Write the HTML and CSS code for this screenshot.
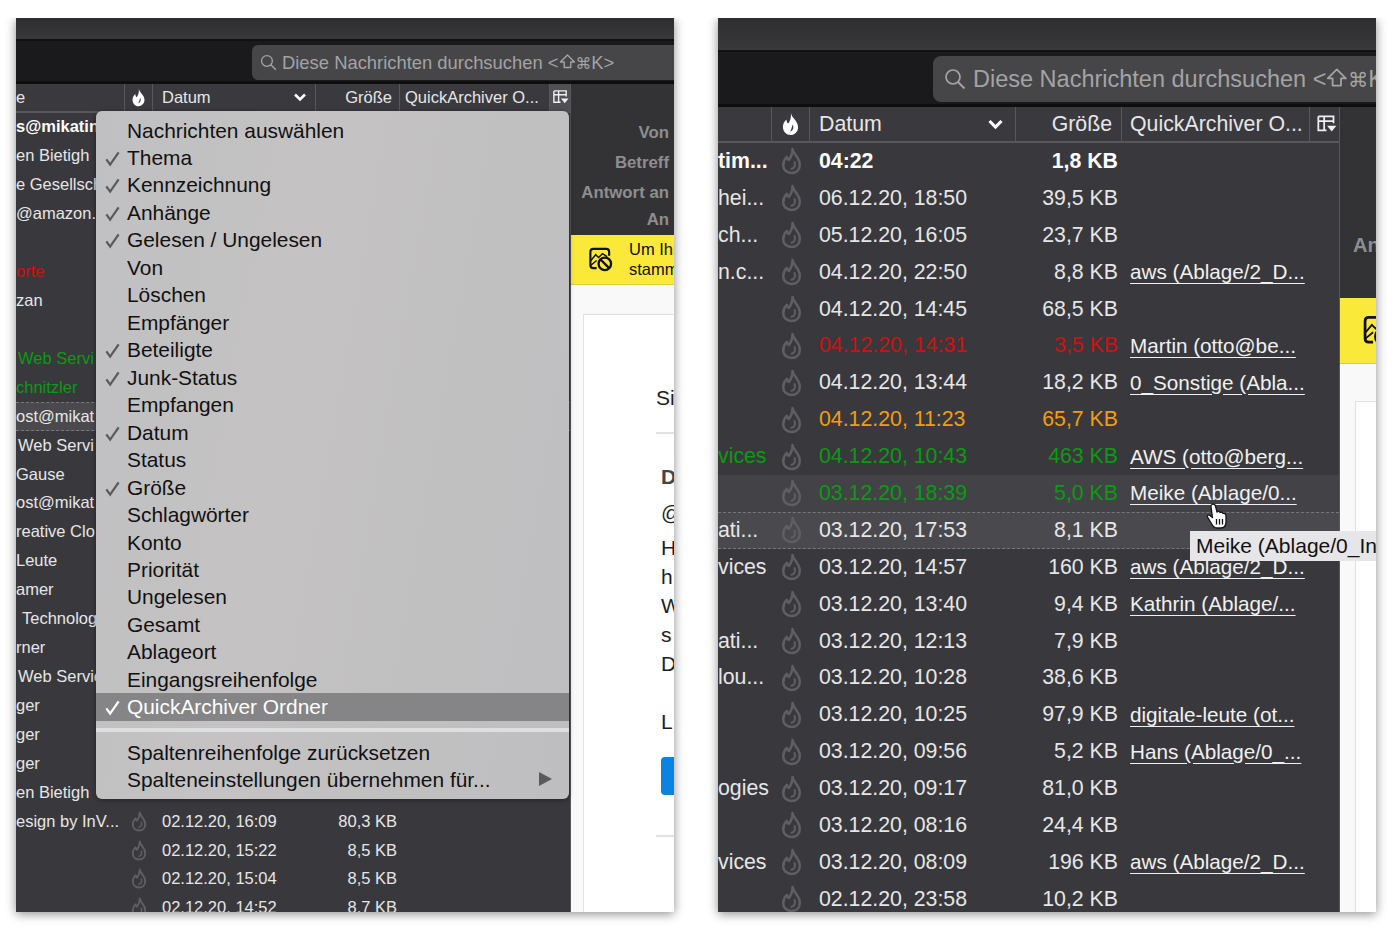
FILE: index.html
```html
<!DOCTYPE html>
<html lang="de">
<head>
  <meta charset="UTF-8" />
  <title>Spaltenauswahl</title>
  <link rel="stylesheet" href="styles.css">
</head>
<body>
  <svg class="defs" width="0" height="0" aria-hidden="true">
    <symbol id="flame" viewBox="0 0 20 27">
      <path d="M11 2C11.500 7 18 10 18 17C18 22 14.500 25 10 25C5.500 25 2 22 2 17.500C2 14 3.500 11.500 5.500 9.500C6 11 6.500 12 7.500 12.500C9.500 10 11 6.500 11 2Z" fill="none" stroke="currentColor" stroke-width="2.500" stroke-linejoin="round"/>
      <path d="M13 14.500C14 17.500 13 20.500 10 21" fill="none" stroke="currentColor" stroke-width="2" stroke-linecap="round"/>
    </symbol>
    <symbol id="flame-solid" viewBox="0 0 20 27">
      <path d="M10.500 1C11 6 18 9.500 18.500 16.500C18.800 22 14.500 26 10 26C5.500 26 1.500 22 1.500 17C1.500 13.500 3 10.500 5.500 8.500C5.500 11 6.300 12.500 7.500 13C9.500 10 11 6 10.500 1Z" fill="currentColor"/>
      <path d="M12.500 14C14 17 13 21 9.500 22C11 19.500 11.500 17 12.500 14Z" fill="#3a3a3e"/>
    </symbol>
    <symbol id="check" viewBox="0 0 18 18">
      <path d="M2.500 10L6.500 15.500L15.500 2.500" fill="none" stroke="currentColor" stroke-width="2.400"/>
    </symbol>
    <symbol id="chevron" viewBox="0 0 14 10">
      <path d="M2 2.500L7 7.500L12 2.500" fill="none" stroke="currentColor" stroke-width="2.600"/>
    </symbol>
    <symbol id="glass" viewBox="0 0 22 22">
      <circle cx="9" cy="9" r="7" fill="none" stroke="currentColor" stroke-width="1.700"/>
      <path d="M14 14L20.500 20.500" stroke="currentColor" stroke-width="1.900"/>
    </symbol>
    <symbol id="shift" viewBox="0 0 18 18">
      <path d="M9 2L16.500 9.500H12.500V15.500H5.500V9.500H1.500Z" fill="none" stroke="currentColor" stroke-width="1.500" stroke-linejoin="round"/>
    </symbol>
    <symbol id="picker" viewBox="0 0 18 18">
      <path d="M2 2H15V8M2 2V14H9M2 6H15M7 2V14" fill="none" stroke="currentColor" stroke-width="1.500"/>
      <path d="M9.500 10H17.500L13.500 15Z" fill="currentColor"/>
    </symbol>
    <symbol id="noimage" viewBox="0 0 26 26">
      <path d="M9 22H5.500C3.500 22 2.500 21 2.500 19V5C2.500 3 3.500 2 5.500 2H19C21 2 22 3 22 5V9" fill="none" stroke="currentColor" stroke-width="2.200"/>
      <path d="M3 14L8 8L11 11L15 7L20 10M3 19L9 14" fill="none" stroke="currentColor" stroke-width="1.500"/>
      <circle cx="17.500" cy="17.500" r="6.500" fill="none" stroke="currentColor" stroke-width="2.400"/>
      <path d="M13 13L22 22" stroke="currentColor" stroke-width="2.400"/>
    </symbol>
  </svg>

  <div class="win win-small">
    <div class="titlebar"></div>
    <div class="toolbar">
      <div class="search">
        <svg class="search-icon"><use href="#glass"/></svg>
        <span>Diese Nachrichten durchsuchen &lt;<svg class="shift"><use href="#shift"/></svg><span class="keys">⌘</span>K&gt;</span>
      </div>
    </div>
    <div class="content">
      <div class="thread">
        <div class="thead">
          <span class="th">e</span>
          <span class="th th-flame"><svg class="flame-head"><use href="#flame-solid"/></svg></span>
          <span class="th th-date">Datum <svg class="chevron"><use href="#chevron"/></svg></span>
          <span class="th th-size">Größe</span>
          <span class="th">QuickArchiver O...</span>
          <span class="th th-picker active"><svg class="picker"><use href="#picker"/></svg></span>
        </div>
        <div class="row unread"><span class="who">s@mikatin</span></div>
        <div class="row"><span class="who">en Bietigh</span></div>
        <div class="row"><span class="who">e Gesellsch</span></div>
        <div class="row"><span class="who">@amazon.c</span></div>
        <div class="row"><span class="who"></span></div>
        <div class="row red"><span class="who">orte</span></div>
        <div class="row"><span class="who">zan</span></div>
        <div class="row"><span class="who"></span></div>
        <div class="row green"><span class="who nudge">Web Servi</span></div>
        <div class="row green"><span class="who">chnitzler</span></div>
        <div class="row selected"><span class="who">ost@mikat</span></div>
        <div class="row"><span class="who nudge">Web Servi</span></div>
        <div class="row"><span class="who">Gause</span></div>
        <div class="row"><span class="who">ost@mikat</span></div>
        <div class="row"><span class="who">reative Clo</span></div>
        <div class="row"><span class="who">Leute</span></div>
        <div class="row"><span class="who">amer</span></div>
        <div class="row"><span class="who nudge-more">Technolog</span></div>
        <div class="row"><span class="who">rner</span></div>
        <div class="row"><span class="who nudge">Web Servic</span></div>
        <div class="row"><span class="who">ger</span></div>
        <div class="row"><span class="who">ger</span></div>
        <div class="row"><span class="who">ger</span></div>
        <div class="row"><span class="who">en Bietigh</span></div>
        <div class="row"><span class="who">esign by InV...</span><svg class="flame"><use href="#flame"/></svg><span class="when">02.12.20, 16:09</span><span class="size">80,3 KB</span></div>
        <div class="row"><span class="who"></span><svg class="flame"><use href="#flame"/></svg><span class="when">02.12.20, 15:22</span><span class="size">8,5 KB</span></div>
        <div class="row"><span class="who"></span><svg class="flame"><use href="#flame"/></svg><span class="when">02.12.20, 15:04</span><span class="size">8,5 KB</span></div>
        <div class="row"><span class="who"></span><svg class="flame"><use href="#flame"/></svg><span class="when">02.12.20, 14:52</span><span class="size">8,7 KB</span></div>
      </div>
      <div class="preview">
        <div class="headers">
          <div class="hl">Von</div>
          <div class="hl">Betreff</div>
          <div class="hl">Antwort an</div>
          <div class="hl">An</div>
        </div>
        <div class="notice">
          <svg class="notice-icon"><use href="#noimage"/></svg>
          <p>Um Ihre<br>stammt</p>
        </div>
        <div class="mail">
          <div class="card">
            <p class="m-title">Si</p>
            <hr>
            <p class="m-bold">D</p>
            <p class="m-at">@</p>
            <p class="m-line">H</p>
            <p class="m-line">h</p>
            <p class="m-line">W</p>
            <p class="m-line">s</p>
            <p class="m-line">D</p>
            <p class="m-sign">L</p>
            <div class="m-btn"></div>
            <hr class="m-end">
          </div>
        </div>
      </div>
    </div>

    <div class="menu">
      <div class="mi">Nachrichten auswählen</div>
      <div class="mi"><svg class="tick"><use href="#check"/></svg>Thema</div>
      <div class="mi"><svg class="tick"><use href="#check"/></svg>Kennzeichnung</div>
      <div class="mi"><svg class="tick"><use href="#check"/></svg>Anhänge</div>
      <div class="mi"><svg class="tick"><use href="#check"/></svg>Gelesen / Ungelesen</div>
      <div class="mi">Von</div>
      <div class="mi">Löschen</div>
      <div class="mi">Empfänger</div>
      <div class="mi"><svg class="tick"><use href="#check"/></svg>Beteiligte</div>
      <div class="mi"><svg class="tick"><use href="#check"/></svg>Junk-Status</div>
      <div class="mi">Empfangen</div>
      <div class="mi"><svg class="tick"><use href="#check"/></svg>Datum</div>
      <div class="mi">Status</div>
      <div class="mi"><svg class="tick"><use href="#check"/></svg>Größe</div>
      <div class="mi">Schlagwörter</div>
      <div class="mi">Konto</div>
      <div class="mi">Priorität</div>
      <div class="mi">Ungelesen</div>
      <div class="mi">Gesamt</div>
      <div class="mi">Ablageort</div>
      <div class="mi">Eingangsreihenfolge</div>
      <div class="mi mi-on"><svg class="tick"><use href="#check"/></svg>QuickArchiver Ordner</div>
      <div class="menu-sep"></div>
      <div class="mi">Spaltenreihenfolge zurücksetzen</div>
      <div class="mi mi-sub">Spalteneinstellungen übernehmen für...</div>
    </div>
  </div>

  <div class="win win-large">
    <div class="titlebar"></div>
    <div class="toolbar">
      <div class="search">
        <svg class="search-icon"><use href="#glass"/></svg>
        <span>Diese Nachrichten durchsuchen &lt;<svg class="shift"><use href="#shift"/></svg><span class="keys">⌘</span>K&gt;</span>
      </div>
    </div>
    <div class="content">
      <div class="thread">
        <div class="thead">
          <span class="th"></span>
          <span class="th th-flame"><svg class="flame-head"><use href="#flame-solid"/></svg></span>
          <span class="th th-date">Datum <svg class="chevron"><use href="#chevron"/></svg></span>
          <span class="th th-size">Größe</span>
          <span class="th">QuickArchiver O...</span>
          <span class="th th-picker"><svg class="picker"><use href="#picker"/></svg></span>
        </div>
        <div class="row unread"><span class="who">tim...</span><svg class="flame"><use href="#flame"/></svg><span class="when">04:22</span><span class="size">1,8 KB</span><span class="folder"></span></div>
        <div class="row"><span class="who">hei...</span><svg class="flame"><use href="#flame"/></svg><span class="when">06.12.20, 18:50</span><span class="size">39,5 KB</span><span class="folder"></span></div>
        <div class="row"><span class="who">ch...</span><svg class="flame"><use href="#flame"/></svg><span class="when">05.12.20, 16:05</span><span class="size">23,7 KB</span><span class="folder"></span></div>
        <div class="row"><span class="who">n.c...</span><svg class="flame"><use href="#flame"/></svg><span class="when">04.12.20, 22:50</span><span class="size">8,8 KB</span><span class="folder">aws (Ablage/2_D...</span></div>
        <div class="row"><span class="who"></span><svg class="flame"><use href="#flame"/></svg><span class="when">04.12.20, 14:45</span><span class="size">68,5 KB</span><span class="folder"></span></div>
        <div class="row red"><span class="who"></span><svg class="flame"><use href="#flame"/></svg><span class="when">04.12.20, 14:31</span><span class="size">3,5 KB</span><span class="folder">Martin (otto@be...</span></div>
        <div class="row"><span class="who"></span><svg class="flame"><use href="#flame"/></svg><span class="when">04.12.20, 13:44</span><span class="size">18,2 KB</span><span class="folder">0_Sonstige (Abla...</span></div>
        <div class="row orange"><span class="who"></span><svg class="flame"><use href="#flame"/></svg><span class="when">04.12.20, 11:23</span><span class="size">65,7 KB</span><span class="folder"></span></div>
        <div class="row green"><span class="who">vices</span><svg class="flame"><use href="#flame"/></svg><span class="when">04.12.20, 10:43</span><span class="size">463 KB</span><span class="folder">AWS (otto@berg...</span></div>
        <div class="row green hovered"><span class="who"></span><svg class="flame"><use href="#flame"/></svg><span class="when">03.12.20, 18:39</span><span class="size">5,0 KB</span><span class="folder">Meike (Ablage/0...</span></div>
        <div class="row selected"><span class="who">ati...</span><svg class="flame"><use href="#flame"/></svg><span class="when">03.12.20, 17:53</span><span class="size">8,1 KB</span><span class="folder"></span></div>
        <div class="row"><span class="who">vices</span><svg class="flame"><use href="#flame"/></svg><span class="when">03.12.20, 14:57</span><span class="size">160 KB</span><span class="folder">aws (Ablage/2_D...</span></div>
        <div class="row"><span class="who"></span><svg class="flame"><use href="#flame"/></svg><span class="when">03.12.20, 13:40</span><span class="size">9,4 KB</span><span class="folder">Kathrin (Ablage/...</span></div>
        <div class="row"><span class="who">ati...</span><svg class="flame"><use href="#flame"/></svg><span class="when">03.12.20, 12:13</span><span class="size">7,9 KB</span><span class="folder"></span></div>
        <div class="row"><span class="who">lou...</span><svg class="flame"><use href="#flame"/></svg><span class="when">03.12.20, 10:28</span><span class="size">38,6 KB</span><span class="folder"></span></div>
        <div class="row"><span class="who"></span><svg class="flame"><use href="#flame"/></svg><span class="when">03.12.20, 10:25</span><span class="size">97,9 KB</span><span class="folder">digitale-leute (ot...</span></div>
        <div class="row"><span class="who"></span><svg class="flame"><use href="#flame"/></svg><span class="when">03.12.20, 09:56</span><span class="size">5,2 KB</span><span class="folder">Hans (Ablage/0_...</span></div>
        <div class="row"><span class="who">ogies</span><svg class="flame"><use href="#flame"/></svg><span class="when">03.12.20, 09:17</span><span class="size">81,0 KB</span><span class="folder"></span></div>
        <div class="row"><span class="who"></span><svg class="flame"><use href="#flame"/></svg><span class="when">03.12.20, 08:16</span><span class="size">24,4 KB</span><span class="folder"></span></div>
        <div class="row"><span class="who">vices</span><svg class="flame"><use href="#flame"/></svg><span class="when">03.12.20, 08:09</span><span class="size">196 KB</span><span class="folder">aws (Ablage/2_D...</span></div>
        <div class="row"><span class="who"></span><svg class="flame"><use href="#flame"/></svg><span class="when">02.12.20, 23:58</span><span class="size">10,2 KB</span><span class="folder"></span></div>
      </div>
      <div class="preview">
        <div class="headers">
          <div class="hl">An</div>
        </div>
        <div class="notice">
          <svg class="notice-icon"><use href="#noimage"/></svg>
        </div>
        <div class="mail">
          <div class="card"></div>
        </div>
      </div>
    </div>

    <div class="tooltip">Meike (Ablage/0_Inbox)</div>
    <svg class="hand" viewBox="0 0 24 28">
      <path d="M7 2.500C8.500 1.500 10 2.500 10.500 4L12 10C13 9 14.500 9 15 10.500C16 10 17.500 10 18 11.500C19.500 11 21 12 21 14L21 20C21 23.500 19 26 15.500 26H12C9.500 26 8 24.500 7 22.500L2.500 15C2 13.500 3.500 12.500 5 13.500L7.500 15.500L6 5C5.800 4 6 3 7 2.500Z" fill="#fff" stroke="#111" stroke-width="1.300" stroke-linejoin="round"/>
      <path d="M11.500 17V22.500M14.500 17V22.500M17.500 17V22.500" stroke="#111" stroke-width="1.300"/>
    </svg>
  </div>
</body>
</html>
```

FILE: styles.css
```css
* {
  box-sizing: border-box;
}
body {
  margin: 0;
  padding: 18px 16px 20px;
  height: 932px;
  overflow: hidden;
  display: flex;
  gap: 44px;
  background-color: #fff;
  font-family: "Liberation Sans", Arial, sans-serif;
  color: #e6e6e7;
}
.defs {
  position: absolute;
}
p {
  margin: 0;
}
svg {
  flex-shrink: 0;
}

/* window */
.win {
  position: relative;
  width: 658px;
  height: 894px;
  display: flex;
  flex-direction: column;
  overflow: hidden;
  background-color: #39393d;
  box-shadow: 0 2px 10px rgba(0, 0, 0, 0.45);
  clip-path: inset(0 -14px -14px -14px);
}
.titlebar {
  background: linear-gradient(#2e2e30, #39393b);
}
.toolbar {
  display: flex;
  justify-content: flex-start;
  background-color: #1a1a1c;
  border-top: 2px solid #111;
  border-bottom: 3px solid #0e0e0f;
}
.search {
  display: flex;
  align-items: center;
  flex: 1;
  white-space: nowrap;
  overflow: hidden;
  background-color: #464648;
  color: #a3a3a4;
}
.keys {
  font-family: "DejaVu Sans", sans-serif;
  font-size: 0.86em;
}
.shift {
  width: 0.92em;
  height: 0.92em;
  vertical-align: -0.1em;
}
.content {
  flex: 1;
  min-height: 0;
  display: flex;
}
.thread {
  overflow: hidden;
  background-color: #39393d;
  border-right: 1px solid #58585c;
}
.thead,
.row {
  display: grid;
  align-items: center;
}
.thead {
  background-color: #3a3a3e;
  border-bottom: 2px solid #58585c;
}
.th {
  display: flex;
  align-items: center;
  height: 100%;
  white-space: nowrap;
  overflow: hidden;
  border-right: 1px solid #58585c;
}
.th-flame {
  justify-content: center;
}
.th-date {
  justify-content: space-between;
}
.th-size {
  justify-content: flex-end;
}
.th-picker {
  justify-content: center;
  border-right: none;
}
.th-picker.active {
  background-color: #505054;
}
.chevron {
  color: #fff;
}
.flame-head {
  color: #fff;
}
.picker {
  color: #f0f0f0;
}
.row {
  border-top: 1px solid transparent;
  border-bottom: 1px solid transparent;
}
.who,
.when,
.size,
.folder {
  white-space: nowrap;
  overflow: hidden;
}
.size {
  text-align: right;
}
.folder {
  text-decoration: underline;
  text-underline-offset: 4px;
  color: #f0f0f0;
}
.flame {
  justify-self: center;
  color: #5f5f63;
}
.unread {
  font-weight: 700;
  color: #fff;
}
.red .who,
.red .when,
.red .size {
  color: #cf1010;
}
.orange .when,
.orange .size {
  color: #f39c12;
}
.green .who,
.green .when,
.green .size {
  color: #0c9a12;
}
.hovered {
  background-color: #434347;
}
.selected {
  background-color: #4a4a4e;
  border-top: 1px dashed #77777b;
  border-bottom: 1px dashed #77777b;
}

/* message pane */
.preview {
  flex: 1;
  min-width: 0;
  display: flex;
  flex-direction: column;
  overflow: hidden;
  background-color: #f9f9fa;
}
.headers {
  background-color: #333336;
  color: #8e8e90;
  font-weight: 700;
}
.notice {
  display: flex;
  align-items: center;
  background-color: #fbe93a;
  border-bottom: 1px solid #d8cc4a;
  color: #111;
  white-space: nowrap;
}
.mail {
  flex: 1;
  min-height: 0;
}
.card {
  height: 100%;
  background-color: #fff;
  border-left: 1px solid #e2e2e4;
  border-top: 1px solid #e2e2e4;
  color: #1d1d1f;
  overflow: hidden;
}

/* small window */
.win-small {
  font-size: 16.500px;
}
.win-small .titlebar {
  height: 21px;
}
.win-small .toolbar {
  height: 45px;
  padding: 4px 0 1px 236px;
}
.win-small .search {
  padding-left: 8px;
  gap: 5px;
  font-size: 18.400px;
  border-radius: 6px 0 0 6px;
}
.win-small .search-icon {
  width: 17px;
  height: 17px;
}
.win-small .thread {
  width: 555px;
}
.win-small .thead,
.win-small .row {
  grid-template-columns: 109px 28px 163px 84px 150px 20px;
}
.win-small .thead {
  height: 28.500px;
}
.win-small .row {
  height: 28.930px;
}
.win-small .th-date {
  padding: 0 8px 0 9px;
}
.win-small .th-size {
  padding-right: 7px;
}
.win-small .th:nth-child(5) {
  padding-left: 5px;
}
.win-small .flame-head {
  width: 15px;
  height: 19px;
}
.win-small .chevron {
  width: 14px;
  height: 10px;
}
.win-small .picker {
  width: 17px;
  height: 17px;
}
.win-small .flame {
  width: 16px;
  height: 21px;
}
.win-small .when {
  padding-left: 9px;
}
.win-small .size {
  padding-right: 3px;
}
.nudge {
  padding-left: 2px;
}
.nudge-more {
  padding-left: 6px;
}
.win-small .headers {
  height: 151px;
  padding: 34px 5px 0 0;
  font-size: 16.800px;
  text-align: right;
}
.win-small .hl {
  height: 30px;
  line-height: 30px;
}
.win-small .hl:last-child {
  height: 24px;
  line-height: 24px;
}
.win-small .notice {
  height: 50px;
  padding-left: 17px;
  gap: 16px;
  font-size: 16.500px;
  line-height: 19.500px;
}
.win-small .notice-icon {
  width: 25px;
  height: 25px;
}
.win-small .mail {
  padding: 29px 0 0 12px;
}
.win-small .card {
  padding: 0 0 0 72px;
  font-size: 21px;
}
.m-title {
  margin-top: 70px;
  height: 25px;
  line-height: 25px;
}
.card hr {
  margin: 22px 0 0;
  border: none;
  height: 2px;
  background-color: #e2e2e4;
}
.m-bold {
  margin: 30px 0 0 5px;
  height: 25px;
  line-height: 25px;
  font-weight: 700;
  color: #444;
}
.m-at {
  margin: 11px 0 0 5px;
  height: 25px;
  line-height: 25px;
}
.m-line {
  margin-left: 5px;
  height: 29px;
  line-height: 29px;
}
.m-at + .m-line {
  margin-top: 8px;
}
.m-sign {
  margin: 29px 0 0 5px;
  height: 29px;
  line-height: 29px;
}
.m-btn {
  margin: 21px 0 0 5px;
  height: 38px;
  background-color: #0a84e0;
  border-radius: 4px 0 0 4px;
}
.card .m-end {
  margin-top: 40px;
}

/* large window */
.win-large {
  font-size: 21.300px;
}
.win-large .titlebar {
  height: 32px;
}
.win-large .toolbar {
  height: 57px;
  padding: 4px 0 2px 215px;
}
.win-large .search {
  padding-left: 11px;
  gap: 7px;
  font-size: 23.500px;
  border-radius: 8px 0 0 8px;
}
.win-large .search-icon {
  width: 22px;
  height: 22px;
}
.win-large .thread {
  width: 622px;
}
.win-large .thead,
.win-large .row {
  grid-template-columns: 54px 38px 206px 106px 188px 29px;
}
.win-large .thead {
  height: 36px;
}
.win-large .row {
  height: 36.900px;
}
.win-large .th-date {
  padding: 0 11px 0 9px;
}
.win-large .th-size {
  padding-right: 9px;
}
.win-large .th:nth-child(5) {
  padding-left: 8px;
}
.win-large .th-picker {
  padding-left: 3px;
}
.win-large .flame-head {
  width: 19px;
  height: 24px;
}
.win-large .chevron {
  width: 17px;
  height: 12px;
}
.win-large .picker {
  width: 21px;
  height: 21px;
}
.win-large .flame {
  width: 21px;
  height: 28px;
}
.win-large .when {
  padding-left: 9px;
}
.win-large .size {
  padding-right: 4px;
}
.win-large .folder {
  padding-left: 8px;
  font-size: 20.700px;
}
.win-large .headers {
  height: 191px;
  padding: 127px 0 0 13px;
  font-size: 20px;
}
.win-large .notice {
  height: 66px;
  padding-left: 22px;
}
.win-large .notice-icon {
  width: 32px;
  height: 32px;
}
.win-large .mail {
  padding: 37px 0 0 15px;
}

/* column menu */
.menu {
  position: absolute;
  left: 80px;
  top: 93px;
  width: 473px;
  height: 688px;
  padding-top: 5.500px;
  border-radius: 6px;
  background: linear-gradient(100deg, #c0c0c2, #c4c2c2 40%, #bebec0);
  color: #111;
  font-size: 20.900px;
  box-shadow: 0 1px 5px rgba(0, 0, 0, 0.4);
}
.mi {
  position: relative;
  height: 27.470px;
  line-height: 27.470px;
  padding-left: 31px;
  white-space: nowrap;
}
.tick {
  position: absolute;
  left: 8px;
  top: 6px;
  width: 17px;
  height: 17px;
  color: #5a5a5c;
}
.mi-on {
  background-color: #858587;
  color: #fff;
}
.mi-on .tick {
  color: #fff;
}
.menu-sep {
  height: 4px;
  margin: 7.500px 0 6.500px;
  background-color: #dedee0;
}
.mi-sub::after {
  content: "";
  position: absolute;
  right: 17px;
  top: 6px;
  border-left: 13px solid #5a5a5c;
  border-top: 7px solid transparent;
  border-bottom: 7px solid transparent;
}

/* hover bits */
.tooltip {
  position: absolute;
  left: 472px;
  top: 513px;
  width: 210px;
  height: 30px;
  padding-left: 6px;
  line-height: 30px;
  background-color: #e6e6e8;
  color: #111;
  font-size: 21px;
  white-space: nowrap;
}
.hand {
  position: absolute;
  left: 487px;
  top: 484px;
  width: 24px;
  height: 28px;
}
```
